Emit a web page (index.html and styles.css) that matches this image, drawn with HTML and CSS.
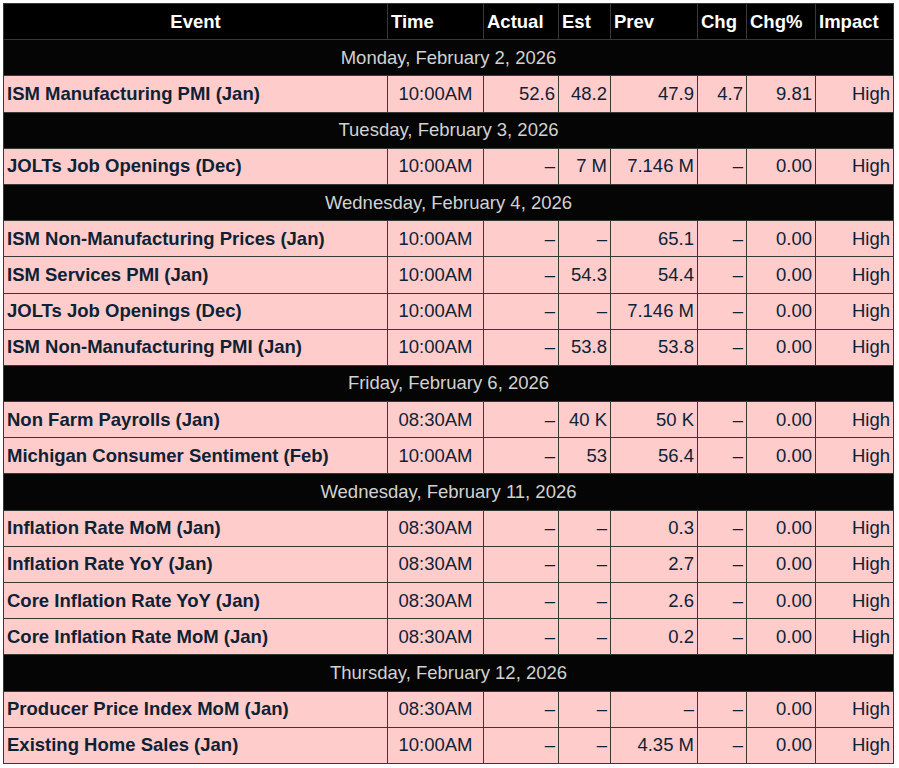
FILE: index.html
```html
<!DOCTYPE html>
<html>
<head>
<meta charset="utf-8">
<link rel="stylesheet" href="styles.css">
</head>
<body>
<table class="cal">
<colgroup>
<col class="c-event"><col class="c-time"><col class="c-actual"><col class="c-est"><col class="c-prev"><col class="c-chg"><col class="c-chgp"><col class="c-impact">
</colgroup>
<thead>
<tr><th class="center">Event</th><th>Time</th><th>Actual</th><th>Est</th><th>Prev</th><th>Chg</th><th>Chg%</th><th>Impact</th></tr>
</thead>
<tbody>
<tr class="date"><td colspan="8">Monday, February 2, 2026</td></tr>
<tr><td class="ev">ISM Manufacturing PMI (Jan)</td><td class="tm">10:00AM</td><td>52.6</td><td>48.2</td><td>47.9</td><td>4.7</td><td>9.81</td><td>High</td></tr>
<tr class="date"><td colspan="8">Tuesday, February 3, 2026</td></tr>
<tr><td class="ev">JOLTs Job Openings (Dec)</td><td class="tm">10:00AM</td><td>–</td><td>7 M</td><td>7.146 M</td><td>–</td><td>0.00</td><td>High</td></tr>
<tr class="date"><td colspan="8">Wednesday, February 4, 2026</td></tr>
<tr><td class="ev">ISM Non-Manufacturing Prices (Jan)</td><td class="tm">10:00AM</td><td>–</td><td>–</td><td>65.1</td><td>–</td><td>0.00</td><td>High</td></tr>
<tr><td class="ev">ISM Services PMI (Jan)</td><td class="tm">10:00AM</td><td>–</td><td>54.3</td><td>54.4</td><td>–</td><td>0.00</td><td>High</td></tr>
<tr><td class="ev">JOLTs Job Openings (Dec)</td><td class="tm">10:00AM</td><td>–</td><td>–</td><td>7.146 M</td><td>–</td><td>0.00</td><td>High</td></tr>
<tr><td class="ev">ISM Non-Manufacturing PMI (Jan)</td><td class="tm">10:00AM</td><td>–</td><td>53.8</td><td>53.8</td><td>–</td><td>0.00</td><td>High</td></tr>
<tr class="date"><td colspan="8">Friday, February 6, 2026</td></tr>
<tr><td class="ev">Non Farm Payrolls (Jan)</td><td class="tm">08:30AM</td><td>–</td><td>40 K</td><td>50 K</td><td>–</td><td>0.00</td><td>High</td></tr>
<tr><td class="ev">Michigan Consumer Sentiment (Feb)</td><td class="tm">10:00AM</td><td>–</td><td>53</td><td>56.4</td><td>–</td><td>0.00</td><td>High</td></tr>
<tr class="date"><td colspan="8">Wednesday, February 11, 2026</td></tr>
<tr><td class="ev">Inflation Rate MoM (Jan)</td><td class="tm">08:30AM</td><td>–</td><td>–</td><td>0.3</td><td>–</td><td>0.00</td><td>High</td></tr>
<tr><td class="ev">Inflation Rate YoY (Jan)</td><td class="tm">08:30AM</td><td>–</td><td>–</td><td>2.7</td><td>–</td><td>0.00</td><td>High</td></tr>
<tr><td class="ev">Core Inflation Rate YoY (Jan)</td><td class="tm">08:30AM</td><td>–</td><td>–</td><td>2.6</td><td>–</td><td>0.00</td><td>High</td></tr>
<tr><td class="ev">Core Inflation Rate MoM (Jan)</td><td class="tm">08:30AM</td><td>–</td><td>–</td><td>0.2</td><td>–</td><td>0.00</td><td>High</td></tr>
<tr class="date"><td colspan="8">Thursday, February 12, 2026</td></tr>
<tr><td class="ev">Producer Price Index MoM (Jan)</td><td class="tm">08:30AM</td><td>–</td><td>–</td><td>–</td><td>–</td><td>0.00</td><td>High</td></tr>
<tr><td class="ev">Existing Home Sales (Jan)</td><td class="tm">10:00AM</td><td>–</td><td>–</td><td>4.35 M</td><td>–</td><td>0.00</td><td>High</td></tr>
</tbody>
</table>
</body>
</html>
```
FILE: styles.css
```css
html, body {
  margin: 0;
  padding: 0;
  background: #ffffff;
}
body {
  padding: 3px;
  font-family: "Liberation Sans", Arial, sans-serif;
  font-size: 18.5px;
}
.cal {
  border-collapse: collapse;
  table-layout: fixed;
  width: 890px;
  color: #0d2234;
}
.c-event { width: 384px; }
.c-time { width: 96px; }
.c-actual { width: 75px; }
.c-est { width: 52px; }
.c-prev { width: 87px; }
.c-chg { width: 49px; }
.c-chgp { width: 69px; }
.c-impact { width: 78px; }
.cal th, .cal td {
  border: 1px solid #383838;
  height: 36.2px;
  padding: 0 3px 1px;
  box-sizing: border-box;
  white-space: nowrap;
  line-height: 21px;
}
.cal th {
  background: #000000;
  color: #ffffff;
  font-weight: bold;
  text-align: left;
}
.cal th.center { text-align: center; }
.cal td {
  background: #ffcccc;
  text-align: right;
}
.cal td.ev {
  text-align: left;
  font-weight: bold;
}
.cal td.tm { text-align: center; }
.cal tr.date td {
  background: #050505;
  color: #d2d2d2;
  text-align: center;
  font-weight: normal;
}
```
